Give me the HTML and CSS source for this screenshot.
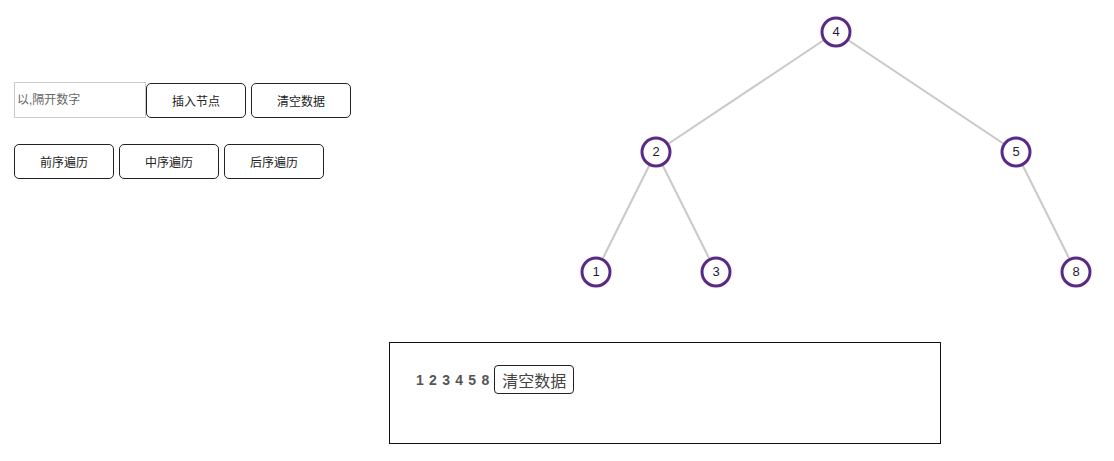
FILE: index.html
```html
<!DOCTYPE html>
<html lang="zh">
<head>
    <meta charset="UTF-8">
    <meta name="viewport" content="width=device-width, initial-scale=1.0">
    <title>二叉树</title>
    <link rel="stylesheet" href="styles.css">
</head>
<body>

<div class="top">
  <div class="controls">
    <div class="row">
      <input type="text" class="num-input" placeholder="以,隔开数字" />
      <button class="btn btn-insert">插入节点</button>
      <button class="btn">清空数据</button>
    </div>
    <div class="row">
      <button class="btn">前序遍历</button>
      <button class="btn">中序遍历</button>
      <button class="btn">后序遍历</button>
    </div>
  </div>

  <svg class="tree" width="725" height="300">
    <g class="links">
      <line x1="447" y1="32" x2="267" y2="152" />
      <line x1="447" y1="32" x2="627" y2="152" />
      <line x1="267" y1="152" x2="207" y2="272" />
      <line x1="267" y1="152" x2="327" y2="272" />
      <line x1="627" y1="152" x2="687" y2="272" />
    </g>
    <g class="nodes">
      <circle cx="447" cy="32" r="14" /><text x="447" y="36">4</text>
      <circle cx="267" cy="152" r="14" /><text x="267" y="156">2</text>
      <circle cx="627" cy="152" r="14" /><text x="627" y="156">5</text>
      <circle cx="207" cy="272" r="14" /><text x="207" y="276">1</text>
      <circle cx="327" cy="272" r="14" /><text x="327" y="276">3</text>
      <circle cx="687" cy="272" r="14" /><text x="687" y="276">8</text>
    </g>
  </svg>
</div>

<div class="output">
  <span class="result">1 2 3 4 5 8</span>
  <button class="clear-btn">清空数据</button>
</div>

</body>
</html>
```

FILE: styles.css
```css
body {
  font-family: "Liberation Sans", "Noto Sans CJK SC", sans-serif;
  margin: 0;
  color: #222;
}

.top {
  display: flex;
  height: 342px;
}

.controls {
  width: 375px;
  padding: 82px 0 0 14px;
}

.row {
  display: flex;
  align-items: center;
  gap: 5px;
  height: 36px;
  margin-bottom: 25px;
}

.num-input {
  box-sizing: border-box;
  width: 132px;
  height: 36px;
  margin: 0;
  padding: 0 2px;
  border: 1px solid #ccc;
  font-family: inherit;
  font-size: 12px;
  outline: none;
}

.num-input::placeholder {
  color: #666;
}

.btn {
  box-sizing: border-box;
  width: 100px;
  height: 35px;
  background: white;
  border: 1px solid #222;
  border-radius: 5px;
  font-family: inherit;
  font-size: 12px;
  color: #222;
  cursor: pointer;
}

.btn-insert {
  margin-left: -5px;
}

.tree {
  display: block;
}

.tree line {
  stroke: #c8c8c8;
  stroke-width: 2;
}

.tree circle {
  fill: white;
  stroke: #5b2a86;
  stroke-width: 3;
}

.tree text {
  font-size: 13px;
  text-anchor: middle;
  fill: #1b1b3a;
}

.output {
  box-sizing: border-box;
  display: flex;
  align-items: center;
  width: 552px;
  height: 102px;
  margin-left: 389px;
  padding: 0 0 27px 26px;
  border: 1px solid #111;
}

.result {
  font-size: 14px;
  font-weight: bold;
  word-spacing: 1.4px;
  color: #555;
  margin-right: 5px;
}

.clear-btn {
  box-sizing: border-box;
  height: 29px;
  padding: 0 7px;
  background: white;
  border: 1px solid #222;
  border-radius: 4px;
  font-family: inherit;
  font-size: 16px;
  color: #444;
}
```
